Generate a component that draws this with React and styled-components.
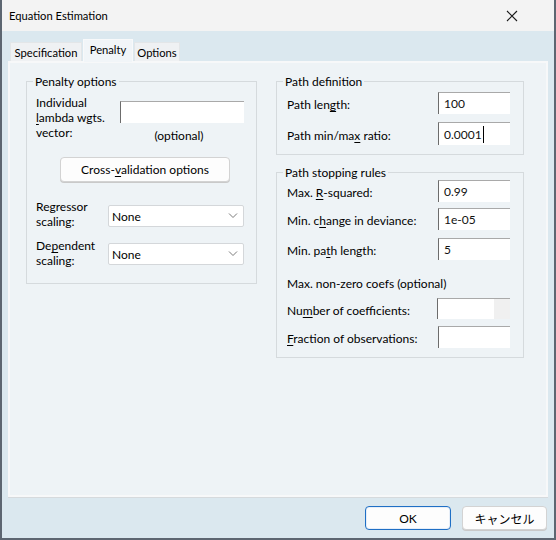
import React from "react";
import styled, { createGlobalStyle } from "styled-components";

const Global = createGlobalStyle`
  html, body { margin: 0; padding: 0; }
  body {
    background: #5d6671;
    font-family: Lato, "Noto Sans", "Noto Sans CJK JP", sans-serif;
    font-size: 12px;
    color: #000;
  }
  #root { width: 556px; height: 540px; overflow: hidden; }
`;

const Window = styled.div`
  margin-left: 2px;
  width: 552px;
  height: 538px;
  display: flex;
  flex-direction: column;
  background: #dbe8ef;
`;

const TitleBar = styled.div`
  height: 31px;
  flex: 0 0 31px;
  background: #f3f3f3;
  display: flex;
  align-items: center;
  justify-content: space-between;
  padding: 0 36px 0 7px;
  font-size: 11.2px;
`;

const Body = styled.div`
  flex: 1;
  display: flex;
  flex-direction: column;
  padding: 8px 6px 0 6px;
`;

const TabStrip = styled.div`
  display: flex;
  align-items: flex-end;
  height: 22px;
  padding-left: 2px;
  position: relative;
  z-index: 1;
`;

const Tab = styled.div`
  width: ${(p) => p.$w}px;
  height: ${(p) => (p.$active ? "23px" : "19px")};
  margin-bottom: ${(p) => (p.$active ? "-1px" : "0")};
  margin-right: 1px;
  background: ${(p) => (p.$active ? "#f1f5f8" : "#eff1f3")};
  border: 1px solid ${(p) => (p.$active ? "#f8f9fa" : "#e3e6e8")};
  border-bottom: none;
  display: flex;
  justify-content: center;
  align-items: ${(p) => (p.$active ? "flex-start" : "center")};
  padding-top: ${(p) => (p.$active ? "3px" : "1px")};
  box-sizing: border-box;
  font-size: 11.2px;
  white-space: nowrap;
`;

const Panel = styled.div`
  height: 436px;
  box-sizing: border-box;
  background: #eef3f6;
  border: 2px solid #f7f8f9;
  box-shadow: 0 1px 0 #d6dadd;
  display: flex;
  gap: 19px;
  padding: 11px 0 0 16px;
`;

const Column = styled.div`
  display: flex;
  flex-direction: column;
  gap: ${(p) => p.$gap || 0}px;
  width: ${(p) => p.$w}px;
`;

const Group = styled.fieldset`
  margin: 0;
  padding: 0;
  border: 1px solid #d5dadd;
  min-width: 0;
`;

const GroupInner = styled.div`
  display: flex;
  flex-direction: column;
  padding: 0 ${(p) => p.$pr || 0}px ${(p) => p.$pb || 0}px ${(p) => p.$pl || 0}px;
`;

const Legend = styled.legend`
  margin-left: 6px;
  padding: 0 2px;
  line-height: 15px;
  font-size: 12px;
`;

const LabelBlock = styled.div`
  line-height: 15px;
  width: ${(p) => p.$w}px;
  flex: 0 0 auto;
`;

const TopRow = styled.div`
  display: flex;
  align-items: flex-start;
  margin-top: ${(p) => p.$mt || 0}px;
`;

const EditColumn = styled.div`
  display: flex;
  flex-direction: column;
  align-items: center;
  margin-top: ${(p) => p.$mt || 0}px;
`;

const Edit = styled.div`
  width: ${(p) => p.$w}px;
  height: ${(p) => p.$h || 22}px;
  box-sizing: border-box;
  background: #fff;
  border-top: 1px solid #a9a9a9;
  border-left: 1px solid #6c6c6c;
  display: flex;
  align-items: center;
  padding-left: 5px;
  font-size: 12px;
  color: #111;
  position: relative;
`;

const Spin = styled.div`
  position: absolute;
  right: 0;
  top: 0;
  bottom: 0;
  width: 16px;
  background: #f0f0f0;
`;

const Caret = styled.span`
  display: inline-block;
  width: 1px;
  height: 17px;
  background: #000;
  margin-left: 1px;
`;

const Hint = styled.div`
  line-height: 15px;
  margin-top: 5px;
  margin-left: -6px;
`;

const PushButton = styled.button`
  font-family: inherit;
  font-size: 12px;
  color: #000;
  background: #fdfdfd;
  border: 1px solid ${(p) => (p.$default ? "#1f6fc5" : "#d3d3d3")};
  box-shadow: ${(p) => (p.$default ? "inset 0 0 0 1px #e6eef8" : "0 1px 0 #c9c9c9")};
  border-radius: 4px;
  width: ${(p) => p.$w}px;
  height: ${(p) => p.$h}px;
  padding: 0;
  margin: ${(p) => p.$m || "0"};
  display: flex;
  align-items: center;
  justify-content: center;
`;

const Select = styled.div`
  width: 136px;
  height: 22px;
  box-sizing: border-box;
  background: #fff;
  border: 1px solid #d4d7da;
  border-radius: 2px;
  display: flex;
  align-items: center;
  justify-content: space-between;
  padding: 0 5px 0 3px;
  margin-top: ${(p) => p.$mt || 0}px;
  font-size: 12px;
`;

const FieldRow = styled.div`
  display: flex;
  align-items: center;
  justify-content: space-between;
  height: ${(p) => p.$h || 22}px;
  margin-top: ${(p) => p.$mt || 0}px;
`;

const FieldLabel = styled.span`
  padding-top: 3px;
`;

const Note = styled.div`
  line-height: 15px;
  margin-top: ${(p) => p.$mt || 0}px;
`;

const Footer = styled.div`
  display: flex;
  justify-content: flex-end;
  gap: 11px;
  padding: 9px 1px 0 0;
`;

const U = styled.u`
  text-decoration-thickness: 1px;
  text-underline-offset: 2px;
`;

const Chevron = () => (
  <svg width="10" height="6" viewBox="0 0 10 6">
    <path d="M1 0.5 L5 4.5 L9 0.5" fill="none" stroke="#7a7a7a" strokeWidth="1" />
  </svg>
);

const CloseIcon = () => (
  <svg width="12" height="12" viewBox="0 0 12 12">
    <path d="M1 1 L11 11 M11 1 L1 11" stroke="#1a1a1a" strokeWidth="1.1" />
  </svg>
);

export default function App() {
  return (
    <>
      <Global />
      <Window>
        <TitleBar>
          <span>Equation Estimation</span>
          <CloseIcon />
        </TitleBar>
        <Body>
          <TabStrip>
            <Tab $w={72}>Specification</Tab>
            <Tab $w={50} $active>
              Penalty
            </Tab>
            <Tab $w={46}>Options</Tab>
          </TabStrip>
          <Panel>
            <Column $w={231}>
              <Group>
                <Legend>Penalty options</Legend>
                <GroupInner $pl={9} $pb={15}>
                  <TopRow $mt={6}>
                    <LabelBlock $w={84}>
                      Individual
                      <br />
                      <U>l</U>ambda wgts.
                      <br />
                      vector:
                    </LabelBlock>
                    <EditColumn $mt={6}>
                      <Edit $w={124} />
                      <Hint>(optional)</Hint>
                    </EditColumn>
                  </TopRow>
                  <PushButton $w={170} $h={25} $m="14px 0 0 24px">
                    Cross-<U>v</U>alidation options
                  </PushButton>
                  <TopRow $mt={17}>
                    <LabelBlock $w={72}>
                      Regressor
                      <br />
                      scaling:
                    </LabelBlock>
                    <Select $mt={6}>
                      None
                      <Chevron />
                    </Select>
                  </TopRow>
                  <TopRow $mt={9}>
                    <LabelBlock $w={72}>
                      De<U>p</U>endent
                      <br />
                      scaling:
                    </LabelBlock>
                    <Select $mt={5}>
                      None
                      <Chevron />
                    </Select>
                  </TopRow>
                </GroupInner>
              </Group>
            </Column>
            <Column $w={248} $gap={10}>
              <Group>
                <Legend>Path definition</Legend>
                <GroupInner $pl={10} $pr={13} $pb={9}>
                  <FieldRow $mt={3}>
                    <FieldLabel>
                      Path len<U>g</U>th:
                    </FieldLabel>
                    <Edit $w={72}>100</Edit>
                  </FieldRow>
                  <FieldRow $mt={8} $h={23}>
                    <FieldLabel>
                      Path min/ma<U>x</U> ratio:
                    </FieldLabel>
                    <Edit $w={72} $h={23}>
                      0.0001
                      <Caret />
                    </Edit>
                  </FieldRow>
                </GroupInner>
              </Group>
              <Group>
                <Legend>Path stopping rules</Legend>
                <GroupInner $pl={10} $pr={13} $pb={9}>
                  <FieldRow $mt={0}>
                    <FieldLabel>
                      Max. <U>R</U>-squared:
                    </FieldLabel>
                    <Edit $w={72}>0.99</Edit>
                  </FieldRow>
                  <FieldRow $mt={6}>
                    <FieldLabel>
                      Min. c<U>h</U>ange in deviance:
                    </FieldLabel>
                    <Edit $w={72}>1e-05</Edit>
                  </FieldRow>
                  <FieldRow $mt={8}>
                    <FieldLabel>
                      Min. pa<U>t</U>h length:
                    </FieldLabel>
                    <Edit $w={72}>5</Edit>
                  </FieldRow>
                  <Note $mt={16}>Max. non-zero coefs (optional)</Note>
                  <FieldRow $mt={7} $h={21}>
                    <FieldLabel>
                      Nu<U>m</U>ber of coefficients:
                    </FieldLabel>
                    <Edit $w={73} $h={21}>
                      <Spin />
                    </Edit>
                  </FieldRow>
                  <FieldRow $mt={7}>
                    <FieldLabel>
                      <U>F</U>raction of observations:
                    </FieldLabel>
                    <Edit $w={72} />
                  </FieldRow>
                </GroupInner>
              </Group>
            </Column>
          </Panel>
          <Footer>
            <PushButton $default $w={86} $h={24}>
              OK
            </PushButton>
            <PushButton $w={85} $h={24}>
              キャンセル
            </PushButton>
          </Footer>
        </Body>
      </Window>
    </>
  );
}
